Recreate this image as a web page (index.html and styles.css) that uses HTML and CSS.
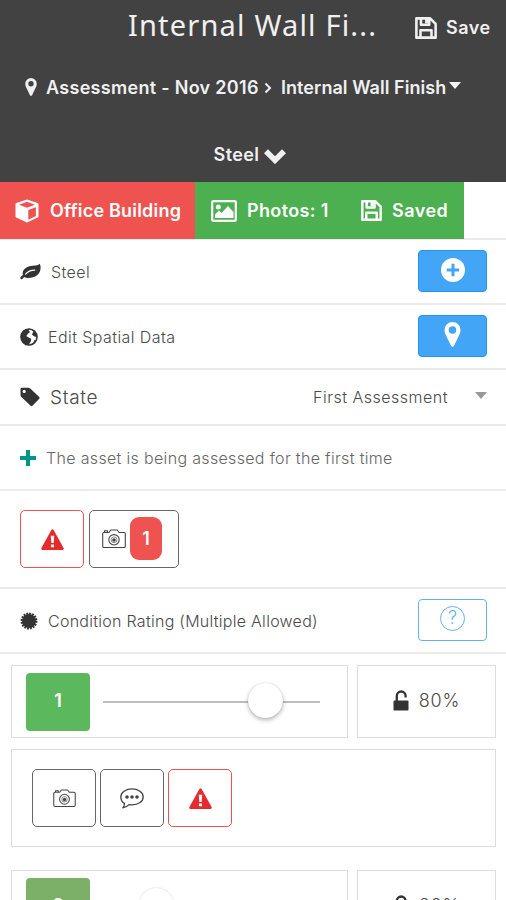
FILE: index.html
```
<!DOCTYPE html>
<html lang="en">
<head>
    <meta charset="UTF-8">
    <meta name="viewport" content="width=device-width, initial-scale=1.0">
    <title>Internal Wall Finish</title>
    <link rel="stylesheet" href="styles.css">
</head>
<body>
    <!-- ICONS -->
    <svg class="sprite">
        <symbol id="i-save" viewBox="0 0 24 24">
            <path fill="none" stroke="currentColor" stroke-width="2.8" stroke-linejoin="round" d="M1.500 1.500H16.500L22.500 7.500V22.500H1.500ZM6 22V14.500H18V22M6.500 2V8.500H15.500V2"/>
            <path fill="currentColor" d="M11 2h3.500v5H11z"/>
        </symbol>
        <symbol id="i-pin" viewBox="0 0 14 22">
            <path fill="currentColor" fill-rule="evenodd" d="M7 0a7 7 0 0 1 7 7c0 2.200-.6 3.300-1.200 4.600L8.300 21a1.450 1.450 0 0 1-2.600 0L1.200 11.600C.6 10.300 0 9.200 0 7a7 7 0 0 1 7-7zm0 3.800a3.300 3.300 0 1 0 0 6.600 3.300 3.300 0 0 0 0-6.600z"/>
        </symbol>
        <symbol id="i-chevron" viewBox="0 0 22 16">
            <path fill="none" stroke="currentColor" stroke-width="5.600" d="M2 3.200l9 9 9-9"/>
        </symbol>
        <symbol id="i-cube" viewBox="0 0 24 24">
            <path fill="currentColor" fill-rule="evenodd" d="M12 .5l10.600 3.600q.9.400.9 1.300v11.800q0 .8-.7 1.200L12 23.500 1.200 18.400q-.7-.4-.7-1.200V5.400q0-.9.900-1.300zM12 2.800L4 5.700l8 3 8-3zM13.300 11v9.800l7.600-3.800V8.200z"/>
        </symbol>
        <symbol id="i-image" viewBox="0 0 26 22">
            <rect x="1.200" y="1.200" width="23.600" height="19.600" rx="1" fill="none" stroke="currentColor" stroke-width="2.200"/>
            <circle cx="7.300" cy="7" r="2.500" fill="currentColor"/>
            <path fill="currentColor" d="M4 18v-3.500l4-4 2.500 2.500L17 6l5.500 6v6z"/>
        </symbol>
        <symbol id="i-leaf" viewBox="0 0 22 17">
            <path fill="currentColor" d="M20.500.3C19 2 17 2.200 13.500 2.400 7 2.800 2.800 6 2.800 10.300c0 .7.1 1.300.3 1.900C1.700 13.400.3 14.400.3 15.300c0 .5.700 1.400 1.300 1.400 1 0 1.800-1.500 2.900-2.400 1 .8 2.500 1 4.200 1C16 15.300 21.600 11 21.600 4.500c0-1.700-.3-3.400-1.100-4.200z"/>
            <path fill="none" stroke="#fff" stroke-width="1.200" stroke-linecap="round" d="M5.800 11.200C8 8.500 11 7 15.500 7"/>
        </symbol>
        <symbol id="i-globe" viewBox="0 0 20 20">
            <circle cx="10" cy="10" r="8.900" fill="#fff" stroke="currentColor" stroke-width="1.800"/>
            <path fill="currentColor" d="M3 3.800C5 1.800 8 1 11 1.300L9.500 3l1.800 1.500-2.500 2L7 9l2.500 1.500 3 1.500-.5 3-2.500 3.800C4 19 1 14 1.200 9zM13 1.600c3 .7 5 3 5.900 6L17.500 10 15 9l-1.800-2 1.600-2.500zM17.800 13l-2.800 5 .5-4z"/>
        </symbol>
        <symbol id="i-tag" viewBox="0 0 20 20">
            <path fill="currentColor" fill-rule="evenodd" d="M1.800.7h6.400c.8 0 1.700.4 2.300 1l8.500 8c.8.8.8 1.600 0 2.300l-6.300 6.600c-.7.700-1.600.7-2.300 0L1.600 10.200C1 9.500.5 8.700.5 7.800V2c0-.7.6-1.300 1.300-1.300zM4.200 2.800a1.600 1.600 0 1 0 0 3.200 1.600 1.600 0 0 0 0-3.200z"/>
        </symbol>
        <symbol id="i-plus" viewBox="0 0 16 16">
            <path stroke="currentColor" stroke-width="4" d="M8 0v16M0 8h16"/>
        </symbol>
        <symbol id="i-plus-circle" viewBox="0 0 24 24">
            <circle cx="12" cy="12" r="12" fill="currentColor"/>
            <path stroke="#42a5f5" stroke-width="3" d="M12 5.800v12.400M5.800 12h12.400"/>
        </symbol>
        <symbol id="i-warning" viewBox="0 0 24 22">
            <path fill="#e52b2b" d="M10.800 1.100c.5-1 1.900-1 2.400 0l10.400 18.800c.5 1-.1 2-1.200 2H1.600c-1.100 0-1.700-1-1.200-2z"/>
            <path fill="#fff" d="M10.200 7h3.600l-.6 7.600h-2.400zM10.400 16.200h3.200v3h-3.200z"/>
        </symbol>
        <symbol id="i-camera" viewBox="0 0 24 20">
            <g fill="none" stroke="currentColor" stroke-width="1.100" stroke-linejoin="round">
                <path d="M2 3.500h5L8.700 1h6.600L17 3.500h5c.8 0 1.300.5 1.300 1.300v12.400c0 .8-.5 1.300-1.300 1.300H2c-.8 0-1.300-.5-1.300-1.300V4.800c0-.8.500-1.300 1.300-1.300zM2.500 3V1.800h3V3"/>
                <circle cx="12" cy="10.800" r="5.200"/>
                <circle cx="12" cy="10.800" r="2.900" stroke-width=".6"/>
            </g>
            <circle cx="12" cy="11" r="1.800" fill="currentColor"/>
        </symbol>
        <symbol id="i-chat" viewBox="0 0 24 21">
            <path fill="none" stroke="currentColor" stroke-width="1.300" stroke-linejoin="round" d="M12 .9c6.200 0 11.200 3.500 11.200 8s-5 8-11.200 8c-1 0-2-.1-3-.3-1.700 1.800-3.800 3-6.200 3.300 1-1.200 1.700-2.700 1.600-4.500C2.100 14 .8 11.600.8 8.900c0-4.500 5-8 11.200-8z"/>
            <g fill="currentColor"><circle cx="7" cy="9" r="1.800"/><circle cx="12" cy="9" r="1.800"/><circle cx="17" cy="9" r="1.800"/></g>
        </symbol>
        <symbol id="i-badge" viewBox="0 0 20 20">
            <circle cx="10" cy="10" r="7.800" fill="currentColor"/>
            <circle cx="10" cy="10" r="8.200" fill="none" stroke="currentColor" stroke-width="2.400" stroke-dasharray="2.100 1.120"/>
        </symbol>
        <symbol id="i-unlock" viewBox="0 0 16 21">
            <path fill="none" stroke="currentColor" stroke-width="2.300" d="M3.800 11V5.900a4.400 4.400 0 0 1 8.800 0V7.500"/>
            <rect x=".5" y="10.500" width="15" height="10" rx="1" fill="currentColor"/>
        </symbol>
    </svg>

    <header>
        <div class="title-bar">
            <h1>Internal Wall Fi...</h1>
            <a class="save"><svg width="22" height="22"><use href="#i-save"/></svg><span>Save</span></a>
        </div>
        <div class="breadcrumb">
            <svg width="12" height="18"><use href="#i-pin"/></svg>
            <span class="crumb-assessment">Assessment - Nov 2016</span>
            <svg class="crumb-sep" width="8" height="12" viewBox="0 0 8 12"><path fill="none" stroke="currentColor" stroke-width="2" d="M1.500 1.500L6 6l-4.500 4.500"/></svg>
            <span class="crumb-item">Internal Wall Finish</span>
            <i class="caret"></i>
        </div>
        <div class="material"><span>Steel</span><svg width="22" height="16"><use href="#i-chevron"/></svg></div>
    </header>

    <nav>
        <a class="tab-building"><svg width="24" height="24"><use href="#i-cube"/></svg><span>Office Building</span></a>
        <a class="tab-photos"><svg width="26" height="22"><use href="#i-image"/></svg><span>Photos: 1</span></a>
        <a class="tab-saved"><svg width="21" height="21"><use href="#i-save"/></svg><span>Saved</span></a>
    </nav>

    <main>
        <div class="row">
            <svg width="21" height="17"><use href="#i-leaf"/></svg>
            <span class="label">Steel</span>
            <button class="action"><svg width="24" height="24"><use href="#i-plus-circle"/></svg></button>
        </div>
        <div class="row">
            <svg width="18" height="18"><use href="#i-globe"/></svg>
            <span class="label">Edit Spatial Data</span>
            <button class="action"><svg width="17" height="25"><use href="#i-pin"/></svg></button>
        </div>
        <div class="row state-row">
            <svg width="20" height="20"><use href="#i-tag"/></svg>
            <span class="label state">State</span>
            <span class="select">First Assessment</span>
            <i class="caret grey"></i>
        </div>
        <div class="row">
            <svg class="teal" width="16" height="16"><use href="#i-plus"/></svg>
            <span class="label note">The asset is being assessed for the first time</span>
        </div>
        <div class="row tools-row">
            <button class="tool danger"><svg width="23" height="21"><use href="#i-warning"/></svg></button>
            <button class="tool photo-count"><svg width="24" height="20"><use href="#i-camera"/></svg><span class="count">1</span></button>
        </div>
        <div class="row">
            <svg width="18" height="18"><use href="#i-badge"/></svg>
            <span class="label condition">Condition Rating (Multiple Allowed)</span>
            <button class="action outline"><span class="help">?</span></button>
        </div>

        <!-- RATINGS -->
        <section class="rating">
            <div class="card slider-card">
                <span class="grade">1</span>
                <div class="slider"><i class="knob" style="left: 75%"></i></div>
            </div>
            <div class="card percent"><svg width="16" height="21"><use href="#i-unlock"/></svg><span>80%</span></div>
            <div class="card tools">
                <button class="tool"><svg width="23" height="19"><use href="#i-camera"/></svg></button>
                <button class="tool"><svg width="24" height="21"><use href="#i-chat"/></svg></button>
                <button class="tool danger"><svg width="23" height="21"><use href="#i-warning"/></svg></button>
            </div>
        </section>
        <section class="rating">
            <div class="card slider-card">
                <span class="grade olive">2</span>
                <div class="slider"><i class="knob" style="left: 25%"></i></div>
            </div>
            <div class="card percent"><svg width="16" height="21"><use href="#i-unlock"/></svg><span>20%</span></div>
        </section>
    </main>
</body>
</html>
```

FILE: styles.css
```
* {
    box-sizing: border-box;
}
body {
    margin: 0;
    height: 900px;
    overflow: hidden;
    font-family: Inter, "Liberation Sans", sans-serif;
    font-size: 16px;
    background: #fff;
    color: #4a4a4a;
}
.sprite {
    position: absolute;
    width: 0;
    height: 0;
}
svg {
    flex: none;
    display: block;
}
span, h1 {
    white-space: nowrap;
}
header {
    height: 182px;
    background: #424242;
    color: #f0f0f0;
}
.title-bar {
    display: flex;
    align-items: center;
    height: 52px;
    padding: 0 15px 0 128px;
}
h1 {
    margin: -4px 0 0;
    width: 287px;
    font-family: "Noto Sans", sans-serif;
    font-size: 29px;
    font-weight: 400;
    letter-spacing: 1.18px;
}
.save {
    display: flex;
    align-items: center;
    gap: 9px;
    font-size: 18px;
    font-weight: 600;
    letter-spacing: 0.5px;
    padding-top: 3px;
}
.breadcrumb {
    display: flex;
    align-items: center;
    height: 70px;
    padding-left: 25px;
    font-size: 18px;
    font-weight: 600;
}
.crumb-assessment {
    margin-left: 9px;
    width: 213px;
    letter-spacing: 0.3px;
}
.crumb-sep {
    margin: 2px 9px 0 5px;
}
.crumb-item {
    width: 166px;
    letter-spacing: 0.05px;
}
.caret {
    border: 6px solid transparent;
    border-top: 7px solid #f5f5f5;
    border-bottom: 0;
    margin: -3px 0 0 2px;
}
.caret.grey {
    border-top-color: #999;
    margin: -3px 0 0 27px;
}
.material {
    display: flex;
    align-items: center;
    justify-content: center;
    gap: 5px;
    height: 64px;
    padding-right: 6px;
    font-size: 18px;
    font-weight: 600;
    letter-spacing: 0.4px;
}
.material svg {
    margin-top: 3px;
}
nav {
    display: flex;
    height: 58px;
    border-bottom: 2px solid #ebebeb;
    color: #fff;
    font-size: 18px;
    font-weight: 600;
    letter-spacing: 0.2px;
}
nav a {
    display: flex;
    align-items: center;
    height: 57px;
}
.tab-building {
    width: 195px;
    padding-left: 15px;
    gap: 11px;
    background: #ef5350;
}
.tab-photos {
    width: 151px;
    padding-left: 16px;
    gap: 10px;
    background: #4caf50;
    letter-spacing: 0.35px;
}
.tab-saved {
    width: 118px;
    padding-left: 15px;
    gap: 10px;
    background: #4caf50;
    letter-spacing: 0.5px;
}
.row {
    display: flex;
    align-items: center;
    height: 65px;
    padding: 0 19px 0 20px;
    border-bottom: 2px solid #ebebeb;
    font-weight: 300;
    letter-spacing: 0.42px;
}
.row > svg {
    color: #333;
}
.label {
    margin-left: 10px;
    flex: 1;
}
.state {
    font-size: 19px;
    letter-spacing: 0.7px;
}
.note {
    color: #666;
    letter-spacing: 0.33px;
}
.condition {
    letter-spacing: 0.27px;
}
.select {
    letter-spacing: 0.5px;
}
.row > .teal {
    color: #009688;
}
.state-row {
    height: 56px;
}
.tools-row {
    height: 98px;
    gap: 5px;
}
button {
    display: flex;
    align-items: center;
    justify-content: center;
    padding: 0;
    background: #fff;
    font-family: inherit;
}
.action {
    width: 69px;
    height: 42px;
    margin-top: -2px;
    padding-bottom: 2px;
    border: 1px solid #2196f3;
    border-radius: 4px;
    background: #42a5f5;
    color: #fff;
}
.action.outline {
    background: #fff;
    border-color: #64b0f5;
    color: #64b0f5;
}
.help {
    width: 25px;
    height: 25px;
    border: 1.5px solid #64b0f5;
    border-radius: 50%;
    font-size: 18px;
    font-weight: 300;
    line-height: 22px;
}
.tool {
    width: 64px;
    height: 58px;
    border: 1px solid #666;
    border-radius: 5px;
    color: #444;
}
.tool.danger {
    border-color: #ef5350;
}
.photo-count {
    width: 90px;
    gap: 4px;
    padding-right: 4px;
}
.photo-count svg {
    margin-top: -1px;
}
.count {
    width: 32px;
    height: 43px;
    margin-top: -2px;
    border-radius: 9px;
    background: #ef5350;
    color: #fff;
    font-size: 18px;
    font-weight: 600;
    line-height: 43px;
}
.rating {
    display: grid;
    grid-template-columns: 337px 139px;
    gap: 11px 9px;
    padding: 11px 10px 0 11px;
}
.rating + .rating {
    padding-top: 23px;
}
.card {
    display: flex;
    align-items: center;
    height: 73px;
    border: 1px solid #ddd;
}
.slider-card {
    padding-left: 14px;
}
.grade {
    width: 64px;
    height: 58px;
    border-radius: 4px;
    background: #5cb85c;
    color: #fff;
    font-size: 18px;
    font-weight: 600;
    line-height: 56px;
    text-align: center;
}
.grade.olive {
    background: #7cb068;
}
.slider {
    position: relative;
    width: 217px;
    height: 2px;
    margin-left: 13px;
    background: #bdbdbd;
}
.knob {
    position: absolute;
    top: -18px;
    width: 35px;
    height: 35px;
    margin-left: -18px;
    border-radius: 50%;
    background: #fff;
    box-shadow: 0 2px 4px rgba(0, 0, 0, 0.3), 0 0 1px rgba(0, 0, 0, 0.2);
}
.rating + .rating .knob {
    box-shadow: 0 0 2px rgba(0, 0, 0, 0.2);
}
.percent {
    justify-content: center;
    gap: 10px;
    padding-bottom: 3px;
    font-size: 18px;
    font-weight: 300;
    letter-spacing: 0.8px;
}
.percent svg {
    color: #333;
}
.tools {
    grid-column: 1 / 3;
    height: 98px;
    padding-left: 20px;
    gap: 4px;
}
```
